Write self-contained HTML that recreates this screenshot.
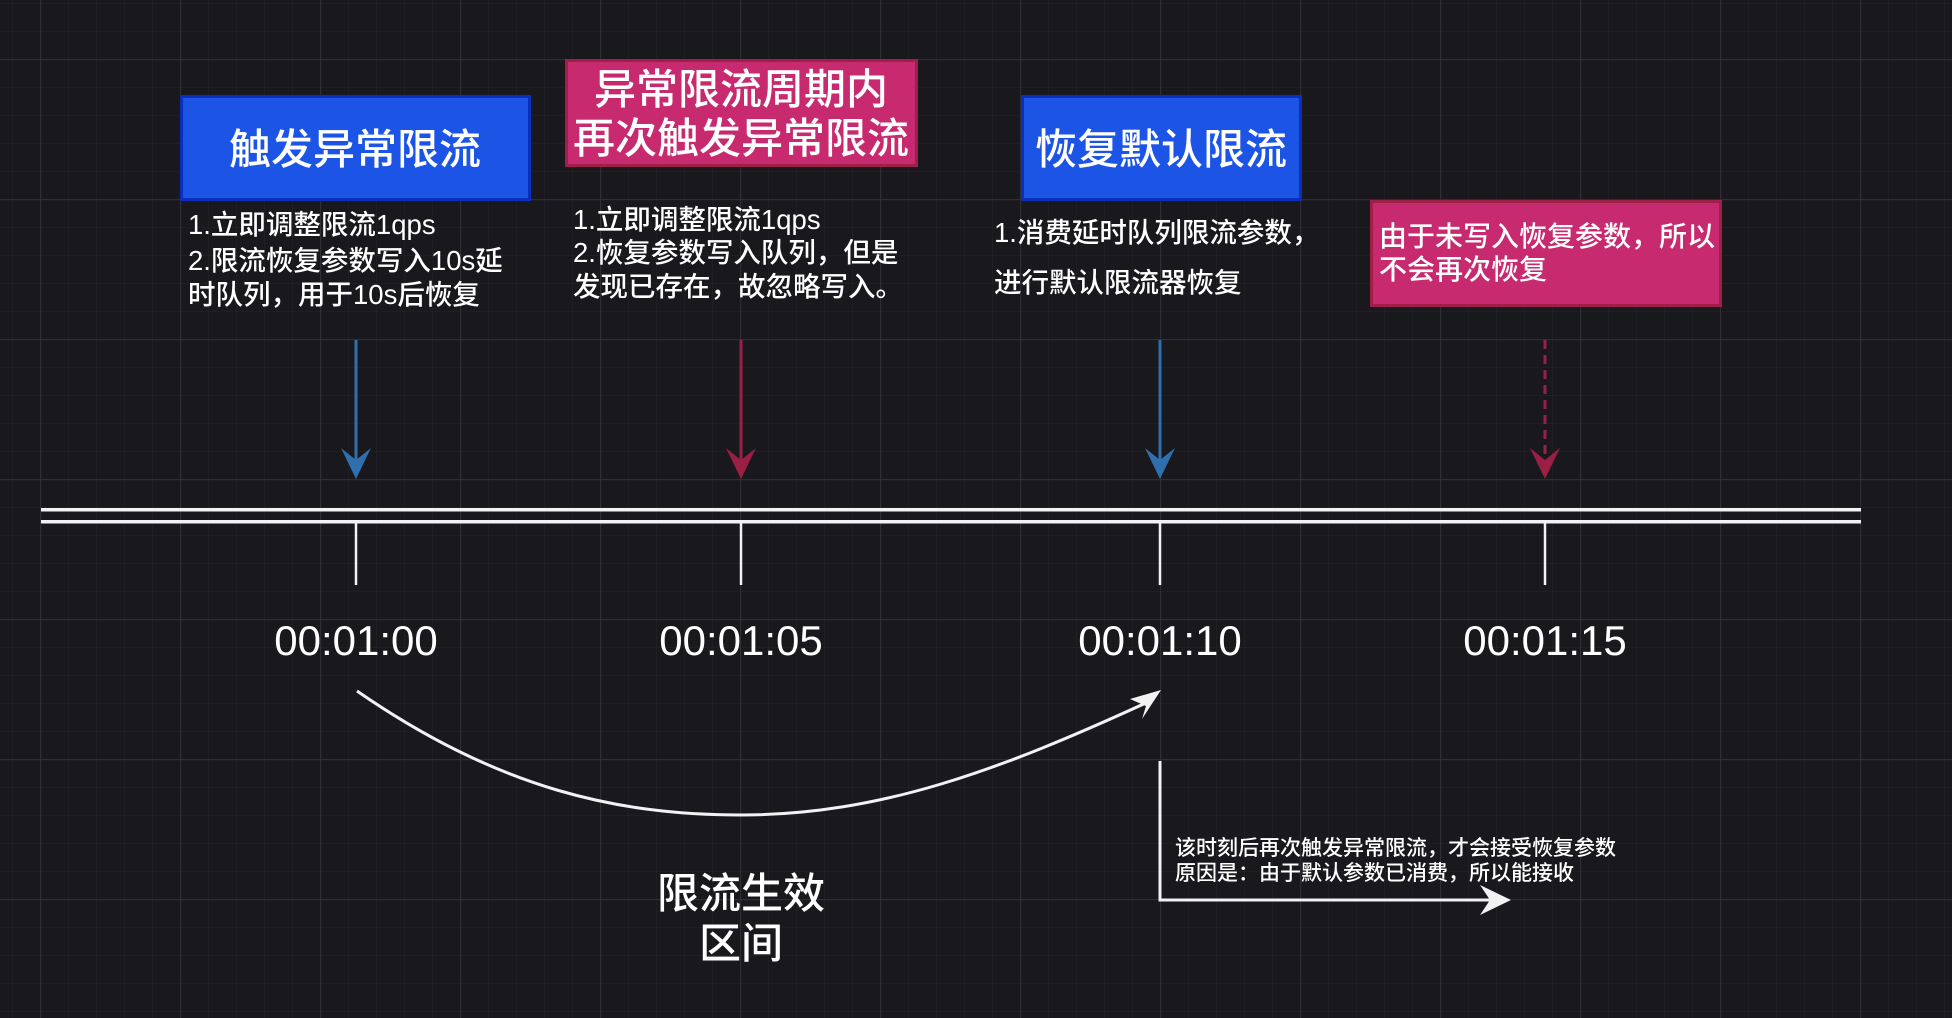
<!DOCTYPE html>
<html><head><meta charset="utf-8"><style>
html,body{margin:0;padding:0;background:#18181d;}
svg{display:block}
text{font-family:"Liberation Sans","Noto Sans CJK SC",sans-serif;fill:#fff;font-weight:500}
</style></head><body>
<svg width="1952" height="1018" viewBox="0 0 1952 1018" xmlns="http://www.w3.org/2000/svg">
<defs>
<pattern id="minor" width="28" height="28" patternUnits="userSpaceOnUse" x="40" y="3">
<path d="M0 0H28M0 0V28" stroke="#24242a" stroke-width="1" fill="none"/>
</pattern>
<pattern id="major" width="140" height="140" patternUnits="userSpaceOnUse" x="40.5" y="59.5">
<path d="M0 0H140M0 0V140" stroke="#38383e" stroke-width="1.2" fill="none"/>
</pattern>
</defs>
<rect width="1952" height="1018" fill="#18181d"/>
<rect width="1952" height="1018" fill="url(#minor)"/>
<rect width="1952" height="1018" fill="url(#major)"/>

<rect x="181.5" y="96.5" width="348" height="103" fill="#1c55e6" stroke="#0a2fbf" stroke-width="3"/>
<text x="355" y="164" font-size="42" text-anchor="middle">触发异常限流</text>

<rect x="566.5" y="60.5" width="350" height="105" fill="#c72a6e" stroke="#a01f48" stroke-width="3"/>
<text x="741" y="104" font-size="42" text-anchor="middle">异常限流周期内</text>
<text x="741" y="153" font-size="42" text-anchor="middle">再次触发异常限流</text>

<rect x="1022.5" y="96.5" width="278" height="103" fill="#1c55e6" stroke="#0a2fbf" stroke-width="3"/>
<text x="1161" y="164" font-size="42" text-anchor="middle">恢复默认限流</text>

<rect x="1371.5" y="201.5" width="349" height="104" fill="#c72a6e" stroke="#a01f48" stroke-width="3"/>
<text x="1379" y="246" font-size="28">由于未写入恢复参数，所以</text>
<text x="1379" y="279" font-size="28">不会再次恢复</text>

<g font-size="27.5">
<text x="188" y="234">1.立即调整限流1qps</text>
<text x="188" y="270">2.限流恢复参数写入10s延</text>
<text x="188" y="304">时队列，用于10s后恢复</text>
<text x="573" y="229">1.立即调整限流1qps</text>
<text x="573" y="262">2.恢复参数写入队列，但是</text>
<text x="573" y="296">发现已存在，故忽略写入。</text>
<text x="994" y="242">1.消费延时队列限流参数，</text>
<text x="994" y="292">进行默认限流器恢复</text>
</g>

<line x1="356" y1="340" x2="356" y2="470" stroke="#2f6fad" stroke-width="3"/>
<path d="M341 448 L356 479 L371 448 L356 460 Z" fill="#2f6fad"/>
<line x1="741" y1="340" x2="741" y2="470" stroke="#9a1f45" stroke-width="3"/>
<path d="M726 448 L741 479 L756 448 L741 460 Z" fill="#9a1f45"/>
<line x1="1160" y1="340" x2="1160" y2="470" stroke="#2f6fad" stroke-width="3"/>
<path d="M1145 448 L1160 479 L1175 448 L1160 460 Z" fill="#2f6fad"/>
<line x1="1545" y1="340" x2="1545" y2="470" stroke="#9a1f45" stroke-width="3" stroke-dasharray="9 6"/>
<path d="M1530 448 L1545 479 L1560 448 L1545 460 Z" fill="#9a1f45"/>

<rect x="41" y="508" width="1820" height="3.5" fill="#f2f2f2"/>
<rect x="41" y="520" width="1820" height="3.5" fill="#f2f2f2"/>
<g stroke="#f2f2f2" stroke-width="2.5">
<line x1="356" y1="523" x2="356" y2="585"/>
<line x1="741" y1="523" x2="741" y2="585"/>
<line x1="1160" y1="523" x2="1160" y2="585"/>
<line x1="1545" y1="523" x2="1545" y2="585"/>
</g>
<g font-size="42" text-anchor="middle">
<text x="356" y="655">00:01:00</text>
<text x="741" y="655">00:01:05</text>
<text x="1160" y="655">00:01:10</text>
<text x="1545" y="655">00:01:15</text>
</g>

<path d="M357 691 C 500 790, 620 815, 741 815 C 880 815, 1000 770, 1148 702" fill="none" stroke="#f2f2f2" stroke-width="3"/>
<path d="M1161 690 L1142 719 L1146 706 L1130 699 Z" fill="#f2f2f2"/>

<path d="M1160 761 V900 H1495" fill="none" stroke="#f2f2f2" stroke-width="3"/>
<path d="M1511 900 L1480 885 L1490 900 L1480 915 Z" fill="#f2f2f2"/>
<text x="1175" y="855" font-size="21">该时刻后再次触发异常限流，才会接受恢复参数</text>
<text x="1175" y="880" font-size="21">原因是：由于默认参数已消费，所以能接收</text>

<text x="741" y="908" font-size="42" text-anchor="middle">限流生效</text>
<text x="741" y="958" font-size="42" text-anchor="middle">区间</text>
</svg>
</body></html>
